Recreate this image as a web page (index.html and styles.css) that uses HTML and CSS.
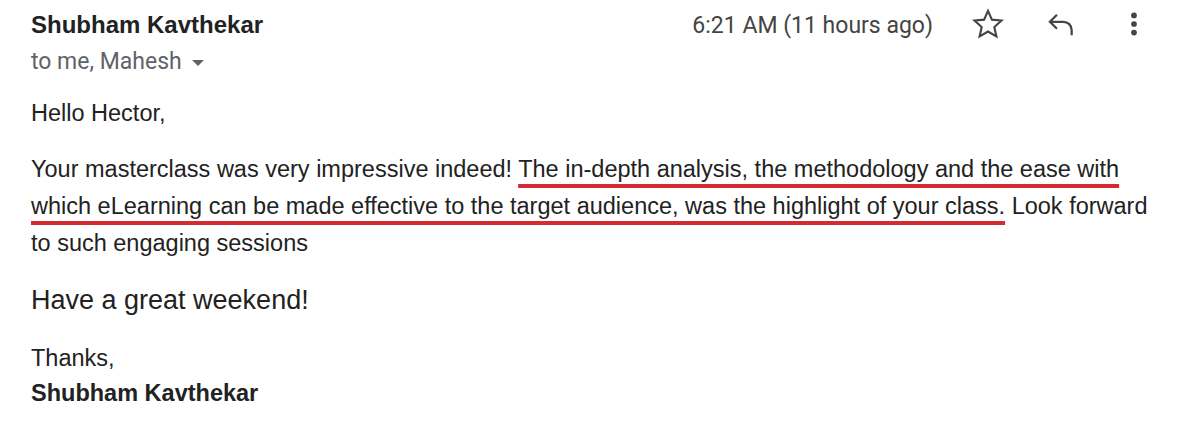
FILE: index.html
```html
<!DOCTYPE html>
<html lang="en">
<head>
    <meta charset="UTF-8">
    <title>Mail</title>
    <link rel="stylesheet" href="styles.css">
</head>
<body>
    <div class="mail">
        <div class="mail-head">
            <div class="sender">
                <div class="sender-name">Shubham Kavthekar</div>
                <div class="recipients">to me, Mahesh <span class="caret"></span></div>
            </div>
            <div class="meta">
                <span class="time">6:21 AM (11 hours ago)</span>
                <svg class="icon" viewBox="0 0 24 24" width="36" height="36">
                    <path d="M12 3.2l2.6 5.9 6.4.6-4.8 4.3 1.4 6.3L12 17l-5.6 3.3 1.4-6.3L3 9.7l6.4-.6z" fill="none" stroke="#444" stroke-width="1.4"/>
                </svg>
                <svg class="icon" viewBox="0 0 24 24" width="36" height="36">
                    <path d="M9.3 5.8L4.6 10.5l4.7 4.7M4.6 10.5h9a5.5 5.5 0 0 1 5.5 5.5v3.5" fill="none" stroke="#444" stroke-width="1.5"/>
                </svg>
                <svg class="icon" viewBox="0 0 24 24" width="36" height="36">
                    <circle cx="12" cy="6.3" r="1.9" fill="#444"/>
                    <circle cx="12" cy="12" r="1.9" fill="#444"/>
                    <circle cx="12" cy="17.7" r="1.9" fill="#444"/>
                </svg>
            </div>
        </div>

        <div class="mail-body">
            <p class="greet">Hello Hector,</p>
            <p class="para">Your masterclass was very impressive indeed! <span class="mark">The in-depth analysis, the methodology and the ease with which eLearning can be made effective to the target audience, was the highlight of your class.</span> Look forward to such engaging sessions</p>
            <p class="big">Have a great weekend!</p>
            <p class="sign">Thanks,<br><b>Shubham Kavthekar</b></p>
        </div>
    </div>
</body>
</html>
```

FILE: styles.css
```css
body {
    margin: 0;
    background: #fff;
    color: #222;
    font-family: 'Liberation Sans', Arial, sans-serif;
}
.mail {
    padding: 6px 30px 0 31px;
}
.mail-head {
    display: flex;
    justify-content: space-between;
    align-items: flex-start;
}
.sender-name {
    margin-top: 4px;
    font-weight: bold;
    font-size: 24px;
    line-height: 30px;
    color: #222;
}
.recipients {
    margin-top: 7px;
    font-family: Roboto, sans-serif;
    font-size: 23px;
    line-height: 30px;
    color: #5f6368;
}
.caret {
    display: inline-block;
    width: 0;
    height: 0;
    margin-left: 5px;
    vertical-align: middle;
    border-left: 6px solid transparent;
    border-right: 6px solid transparent;
    border-top: 6px solid #5f6368;
}
.meta {
    display: flex;
    align-items: center;
    gap: 37px;
    height: 36px;
}
.time {
    padding-top: 2px;
    font-family: Roboto, sans-serif;
    font-size: 23px;
    color: #444;
}
.icon {
    display: block;
}
.mail-body {
    font-size: 23.5px;
    color: #222;
}
.mail-body p {
    margin: 0;
}
.greet {
    margin-top: 21px !important;
    line-height: 30px;
}
.para {
    margin-top: 23px !important;
    line-height: 37px;
}
.mark {
    text-decoration: underline;
    text-decoration-color: #d42a32;
    text-decoration-thickness: 4px;
    text-underline-offset: 7px;
    text-decoration-skip-ink: none;
}
.big {
    margin-top: 21px !important;
    font-size: 27px;
    line-height: 34px;
}
.sign {
    margin-top: 24px !important;
    line-height: 35px;
}
```
